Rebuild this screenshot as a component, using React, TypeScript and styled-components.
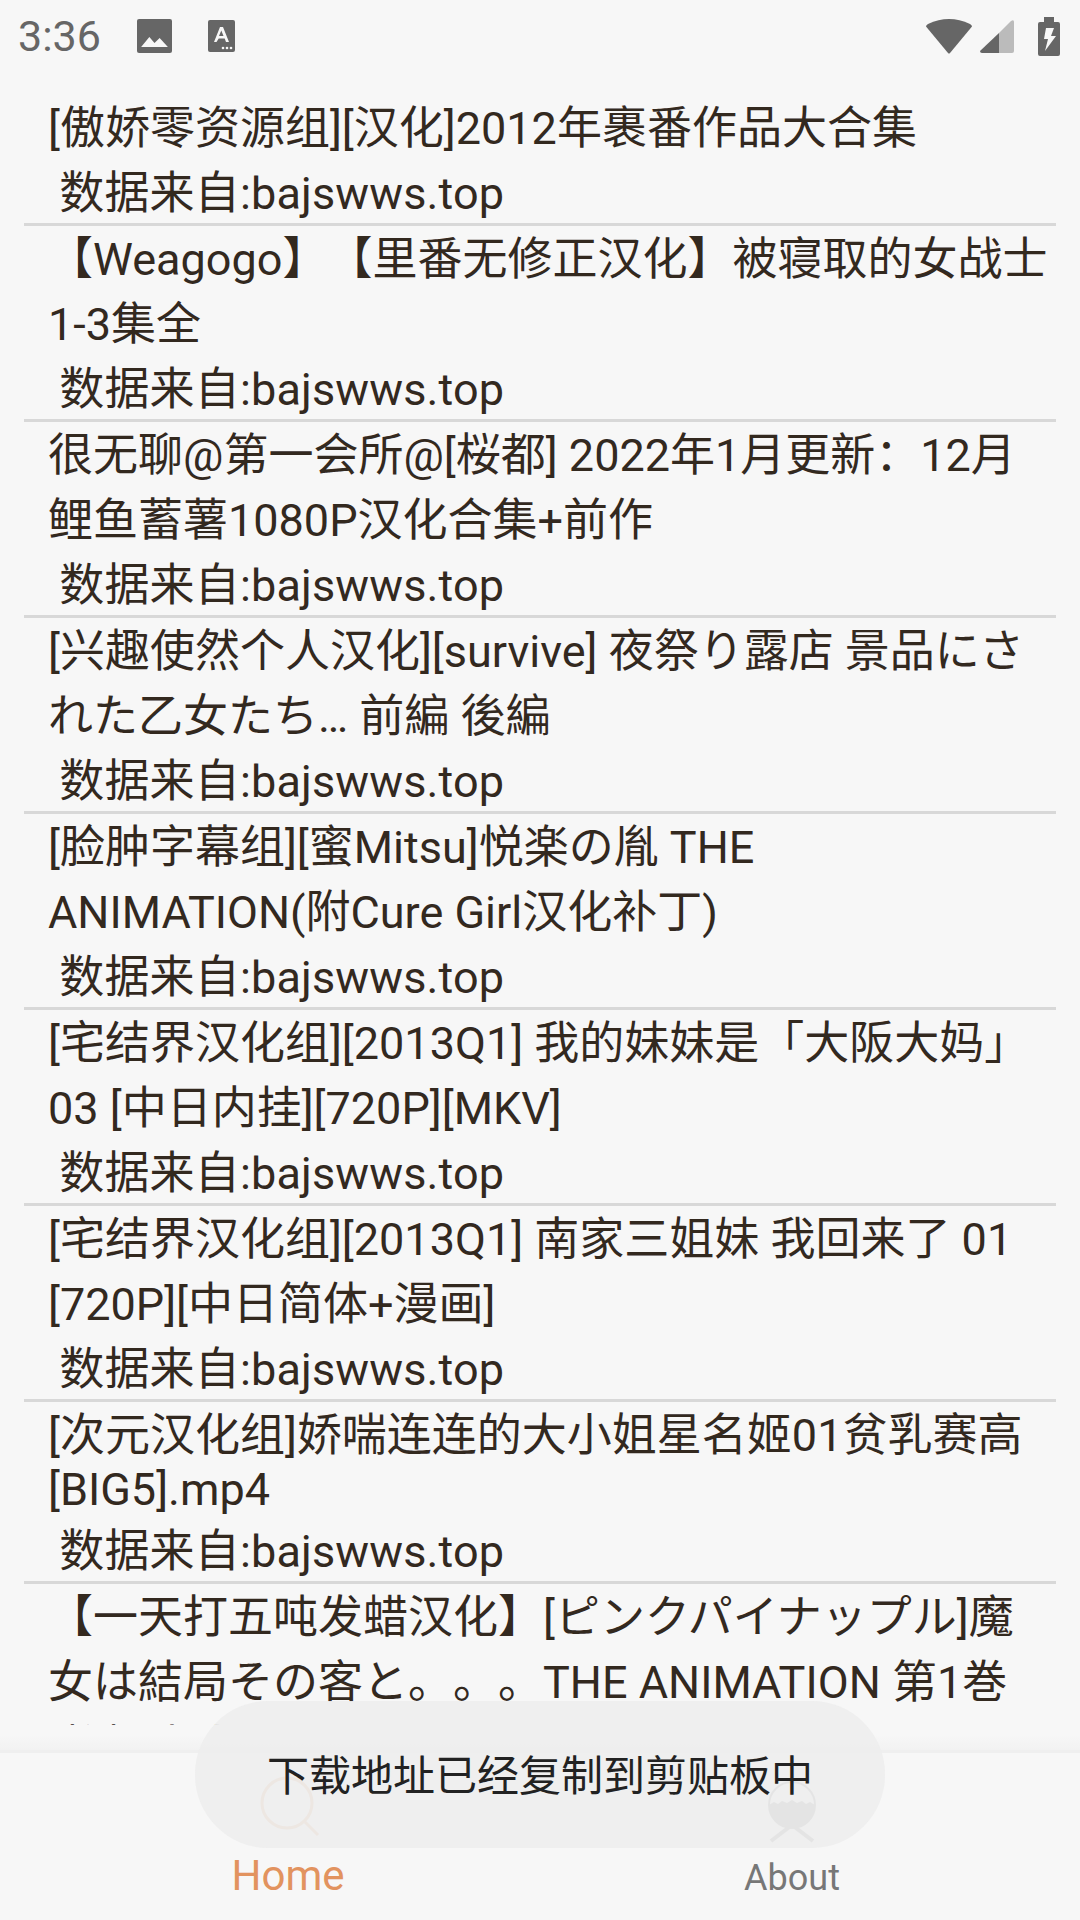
import styled, { createGlobalStyle } from "styled-components";

const FONT = `Roboto, "Noto Sans CJK SC", sans-serif`;

const resourceList = [
  { title: ["[傲娇零资源组][汉化]2012年裹番作品大合集"] },
  { title: ["【Weagogo】【里番无修正汉化】被寝取的女战士", "1-3集全"] },
  { title: ["很无聊@第一会所@[桜都] 2022年1月更新：12月", "鲤鱼蓄薯1080P汉化合集+前作"] },
  { title: ["[兴趣使然个人汉化][survive] 夜祭り露店 景品にさ", "れた乙女たち… 前編 後編"] },
  { title: ["[脸肿字幕组][蜜Mitsu]悦楽の胤 THE", "ANIMATION(附Cure Girl汉化补丁)"] },
  { title: ["[宅结界汉化组][2013Q1] 我的妹妹是「大阪大妈」", "03 [中日内挂][720P][MKV]"] },
  { title: ["[宅结界汉化组][2013Q1] 南家三姐妹 我回来了 01", "[720P][中日简体+漫画]"] },
  { title: ["[次元汉化组]娇喘连连的大小姐星名姬01贫乳赛高", "[BIG5].mp4"], compact: true },
  { title: ["【一天打五吨发蜡汉化】[ピンクパイナップル]魔", "女は結局その客と。。。THE ANIMATION 第1巻"] },
];

function App() {
  return (
    <Page>
      <GlobalStyle />
      <StatusBar>
        <StatusLeft>
          <Clock>3:36</Clock>
          <svg width="35" height="34" viewBox="0 0 34 34" preserveAspectRatio="none">
            <rect width="34" height="34" rx="2" fill="#666" />
            <path d="M4 28l8-10 5 6 5-5 8 9z" fill="#f7f7f7" />
          </svg>
          <svg width="27" height="32" viewBox="0 0 27 32">
            <rect width="27" height="32" rx="2" fill="#666" />
            <path d="M6 22l6-15h3l6 15h-3l-1.300-3.500h-6L8.500 22zM11 16h4.500l-2.200-5.500z" fill="#f7f7f7" />
            <circle cx="15" cy="28" r="1.300" fill="#f7f7f7" />
            <circle cx="19" cy="28" r="1.300" fill="#f7f7f7" />
            <circle cx="23" cy="28" r="1.300" fill="#f7f7f7" />
          </svg>
        </StatusLeft>
        <StatusRight>
          <svg width="46" height="36" viewBox="0 0 46 36">
            <path d="M0 8.500Q0 7 2 6Q23-4 44 6Q46 7 46 8.500L24 35Q23 36 22 35Z" fill="#666" />
          </svg>
          <svg width="34" height="34" viewBox="0 0 34 34">
            <path d="M19 14V34H2Q0 34 0 32Z" fill="#666" />
            <path d="M19 14L31 2Q34 0 34 3V32Q34 34 32 34H19Z" fill="#bbb" />
          </svg>
          <BatteryIcon width="22" height="39" viewBox="0 0 22 39">
            <path d="M6 0h10v5h4q2 0 2 2v30q0 2-2 2H2q-2 0-2-2V7q0-2 2-2h4z" fill="#666" />
            <path d="M8 11h8l-3 8h5L7 34l3-12H6z" fill="#f7f7f7" />
          </BatteryIcon>
        </StatusRight>
      </StatusBar>

      <ResourceList>
        {resourceList.map((item) => (
          <ResourceRow key={item.title[0]}>
            {item.title.map((line, index) => (
              <TitleLine
                key={line}
                $compact={!!item.compact && index === 1}
              >
                {line}
              </TitleLine>
            ))}
            <SourceLine> 数据来自:bajswws.top</SourceLine>
          </ResourceRow>
        ))}
      </ResourceList>
      <TabShade />

      <TabBar>
        <TabItem>
          <TabIcon>
            <svg width="64" height="64" viewBox="0 0 64 64" fill="none">
              <circle cx="31" cy="27" r="25" stroke="#e2935f" strokeWidth="3" />
              <path d="M49 46l13 13" stroke="#e2935f" strokeWidth="3" />
            </svg>
          </TabIcon>
          <TabLabel $active>Home</TabLabel>
        </TabItem>
        <TabItem>
          <TabIcon>
            <svg width="52" height="68" viewBox="0 0 52 68" fill="none">
              <circle cx="26" cy="29" r="23" stroke="#777" strokeWidth="2" />
              <path
                d="M3 29l5-3 4 2 4-3 5 2 5-3 5 3 5-2 4 3 4-2 5 3a23 23 0 0 1-46 0z"
                fill="#777"
              />
              <path d="M5 65l21-16 21 16" stroke="#777" strokeWidth="4" />
            </svg>
          </TabIcon>
          <TabLabel>About</TabLabel>
        </TabItem>
      </TabBar>

      <Toast>下载地址已经复制到剪贴板中</Toast>
    </Page>
  );
}

const GlobalStyle = createGlobalStyle`
  html,
  body {
    margin: 0;
    padding: 0;
    background-color: #f7f7f7;
  }
`;

const Page = styled.div`
  position: relative;
  display: flex;
  flex-direction: column;
  width: 1080px;
  height: 1920px;
  overflow: hidden;
  background-color: #f7f7f7;
  font-family: ${FONT};
  text-spacing-trim: space-all;
`;

const StatusBar = styled.div`
  display: flex;
  flex: none;
  align-items: center;
  justify-content: space-between;
  height: 72px;
  padding: 0 20px 0 18px;
  box-sizing: border-box;
`;

const StatusLeft = styled.div`
  display: flex;
  align-items: center;
  gap: 36px;
`;

const StatusRight = styled.div`
  display: flex;
  align-items: center;
  gap: 8px;
`;

const BatteryIcon = styled.svg`
  margin-left: 16px;
`;

const Clock = styled.span`
  font-size: 43px;
  color: #666;
`;

const ResourceList = styled.div`
  flex: 1;
  min-height: 0;
  overflow: hidden;
  padding: 23px 24px 0;
`;

const ResourceRow = styled.div`
  padding: 1px 0 2px 24px;
  border-bottom: 3px solid #d8d8d8;
`;

const TitleLine = styled.div<{ $compact?: boolean }>`
  height: ${(props) => (props.$compact ? "51px" : "65px")};
  line-height: ${(props) => (props.$compact ? "44px" : "65px")};
  font-size: 45px;
  color: #33291f;
  white-space: nowrap;
`;

const SourceLine = styled.div`
  height: 55px;
  padding-top: 5px;
  line-height: 55px;
  font-size: 45px;
  letter-spacing: 0.15px;
  color: #33291f;
  white-space: pre;
`;

const TabShade = styled.div`
  flex: none;
  height: 25px;
  background: linear-gradient(#f7f7f7 40%, #f2f2f2);
`;

const TabBar = styled.div`
  display: flex;
  flex: none;
  height: 170px;
  padding: 0 36px;
  box-sizing: border-box;
  border-top: 3px solid #efefef;
`;

const TabItem = styled.div`
  display: flex;
  flex: 1;
  flex-direction: column;
  align-items: center;
`;

const TabIcon = styled.div`
  display: flex;
  align-items: flex-start;
  justify-content: center;
  height: 75px;
  padding-top: 23px;
`;

const TabLabel = styled.div<{ $active?: boolean }>`
  font-size: ${(props) => (props.$active ? "42px" : "36px")};
  line-height: ${(props) => (props.$active ? "50px" : "54px")};
  color: ${(props) => (props.$active ? "#e2935f" : "#777")};
`;

const Toast = styled.div`
  position: absolute;
  left: 195px;
  top: 1701px;
  display: flex;
  align-items: center;
  justify-content: center;
  width: 690px;
  height: 147px;
  padding-bottom: 5px;
  box-sizing: border-box;
  border-radius: 73px;
  background-color: rgba(238, 238, 238, 0.92);
  font-size: 42px;
  color: #222;
`;

export default App;
